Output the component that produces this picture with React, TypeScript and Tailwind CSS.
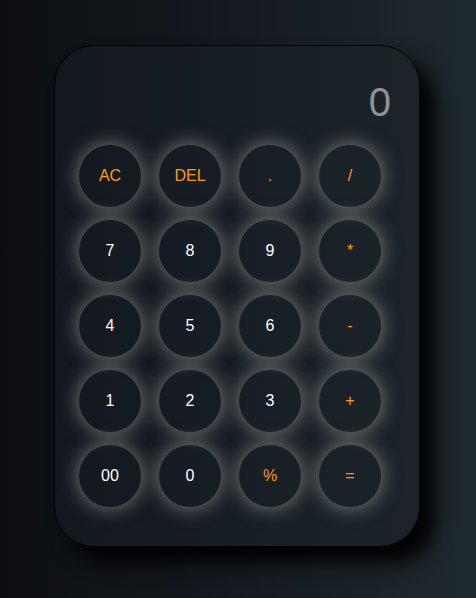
import React from "react";

type Key = { label: string; op?: boolean };

const keys: Key[] = [
  { label: "AC", op: true },
  { label: "DEL", op: true },
  { label: ".", op: true },
  { label: "/", op: true },
  { label: "7" },
  { label: "8" },
  { label: "9" },
  { label: "*", op: true },
  { label: "4" },
  { label: "5" },
  { label: "6" },
  { label: "-", op: true },
  { label: "1" },
  { label: "2" },
  { label: "3" },
  { label: "+", op: true },
  { label: "00" },
  { label: "0" },
  { label: "%", op: true },
  { label: "=", op: true },
];

export default function App() {
  return (
    <div
      className="w-full h-[598px] flex items-start justify-start pt-[45px] pl-[54px] bg-gradient-to-r from-[#0c0e12] via-[#151a20] to-[#1f2a2e]"
      style={{ fontFamily: '"Liberation Sans", Arial, sans-serif' }}
    >
      <div className="w-[366px] h-[502px] rounded-[40px] border border-black bg-gradient-to-r from-[#13181f] to-[#1c242a] shadow-[15px_15px_20px_#000] flex flex-col">
        <div className="mt-[36px] pr-[28px] text-right text-[40px] leading-none text-[#8d9398]">
          0
        </div>
        <div className="mt-[23px] pl-[24px] grid grid-cols-[repeat(4,62px)] gap-x-[18px] gap-y-[13px]">
          {keys.map((k) => (
            <button
              key={k.label}
              className={
                "w-[62px] h-[62px] rounded-full bg-transparent shadow-[0_0_20px_rgba(240,236,220,0.5)] flex items-center justify-center text-[16px] " +
                (k.op ? "text-[#ff9a0a]" : "text-white")
              }
            >
              {k.label}
            </button>
          ))}
        </div>
      </div>
    </div>
  );
}
